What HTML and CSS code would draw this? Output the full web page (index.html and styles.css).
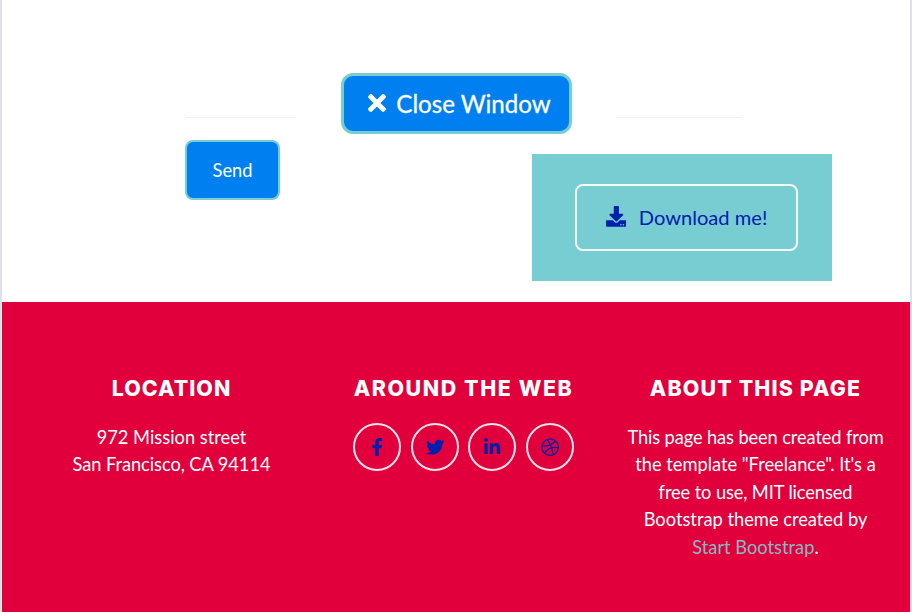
FILE: index.html
```html
<!DOCTYPE html>
<html lang="en">
<head>
<meta charset="utf-8">
<title>Freelance</title>
<link rel="stylesheet" href="styles.css">
</head>
<body>
<div class="page">
  <main class="content">
    <div class="close-row">
      <hr class="rule rule-left">
      <button class="btn btn-close"><svg class="icon-times" viewBox="0 0 352 512"><path d="M242.72 256l100.07-100.07c12.28-12.28 12.28-32.19 0-44.48l-22.24-22.24c-12.28-12.28-32.19-12.28-44.48 0L176 189.28 75.93 89.21c-12.28-12.28-32.19-12.28-44.48 0L9.21 111.45c-12.28 12.28-12.28 32.19 0 44.48L109.28 256 9.21 356.07c-12.28 12.28-12.28 32.19 0 44.48l22.24 22.24c12.28 12.28 32.2 12.28 44.48 0L176 322.72l100.07 100.07c12.28 12.28 32.2 12.28 44.48 0l22.24-22.24c12.28-12.28 12.28-32.19 0-44.48L242.72 256z"/></svg><span>Close Window</span></button>
      <hr class="rule rule-right">
    </div>
    <div class="action-row">
      <button class="btn btn-send">Send</button>
      <div class="download-panel">
        <button class="btn btn-download"><svg class="icon-download" viewBox="0 0 512 512"><path d="M216 0h80c13.3 0 24 10.7 24 24v168h87.7c17.8 0 26.7 21.5 14.1 34.1L269.7 378.3c-7.5 7.5-19.8 7.5-27.3 0L90.1 226.1c-12.6-12.6-3.7-34.1 14.1-34.1H192V24c0-13.3 10.7-24 24-24zm296 376v112c0 13.3-10.7 24-24 24H24c-13.3 0-24-10.7-24-24V376c0-13.3 10.7-24 24-24h146.7l49 49c20.1 20.1 52.5 20.1 72.6 0l49-49H488c13.3 0 24 10.7 24 24zm-124 88c0-11-9-20-20-20s-20 9-20 20 9 20 20 20 20-9 20-20zm64 0c0-11-9-20-20-20s-20 9-20 20 9 20 20 20 20-9 20-20z"/></svg><span>Download me!</span></button>
      </div>
    </div>
  </main>
  <footer class="footer">
    <section class="column">
      <h4 class="heading location">LOCATION</h4>
      <p class="text">972 Mission street<br><span class="snug">San Francisco, CA 94114</span></p>
    </section>
    <section class="column">
      <h4 class="heading around">AROUND THE WEB</h4>
      <div class="social">
        <a class="social-link" aria-label="Facebook"><svg viewBox="-96 0 512 512"><path d="M279.14 288l14.22-92.66h-88.91v-60.13c0-25.35 12.42-50.06 52.24-50.06h40.42V6.26S260.43 0 225.36 0c-73.22 0-121.08 44.38-121.08 124.72v70.62H22.89V288h81.39v224h100.17V288z"/></svg></a>
        <a class="social-link" aria-label="Twitter"><svg viewBox="0 0 512 512"><path d="M459.37 151.716c.325 4.548.325 9.097.325 13.645 0 138.72-105.583 298.558-298.558 298.558-59.452 0-114.68-17.219-161.137-47.106 8.447.974 16.568 1.299 25.34 1.299 49.055 0 94.213-16.568 130.274-44.832-46.132-.975-84.792-31.188-98.112-72.772 6.498.974 12.995 1.624 19.818 1.624 9.421 0 18.843-1.3 27.614-3.573-48.081-9.747-84.143-51.98-84.143-102.985v-1.299c13.969 7.797 30.214 12.67 47.431 13.319-28.264-18.843-46.781-51.005-46.781-87.391 0-19.492 5.197-37.36 14.294-52.954 51.655 63.675 129.3 105.258 216.365 109.807-1.624-7.797-2.599-15.918-2.599-24.04 0-57.828 46.782-104.934 104.934-104.934 30.213 0 57.502 12.67 76.67 33.137 23.715-4.548 46.456-13.32 66.599-25.34-7.798 24.366-24.366 44.833-46.132 57.827 21.117-2.273 41.584-8.122 60.426-16.243-14.292 20.791-32.161 39.308-52.628 54.253z"/></svg></a>
        <a class="social-link" aria-label="LinkedIn"><svg viewBox="-32 0 512 512"><path d="M100.28 448H7.4V148.9h92.88zM53.79 108.1C24.09 108.1 0 83.5 0 53.8a53.79 53.79 0 0 1 107.58 0c0 29.7-24.1 54.3-53.79 54.3zM447.9 448h-92.68V302.4c0-34.7-.7-79.2-48.29-79.2-48.29 0-55.69 37.7-55.69 76.7V448h-92.78V148.9h89.08v40.8h1.3c12.4-23.5 42.69-48.3 87.88-48.3 94 0 111.28 61.9 111.28 142.3V448z"/></svg></a>
        <a class="social-link" aria-label="Dribbble"><svg class="outline" viewBox="0 0 512 512"><circle cx="256" cy="256" r="230"/><path d="M172 43c65 82 135 205 168 412M30 225c147 2 274-20 370-146M102 424c74-126 197-190 381-153"/></svg></a>
      </div>
    </section>
    <section class="column">
      <h4 class="heading about">ABOUT THIS PAGE</h4>
      <p class="text"><span class="tight">This page has been created from</span><br>the template "Freelance". It's a<br><span class="tight">free to use, MIT licensed</span><br>Bootstrap theme created by<br><a class="link">Start Bootstrap</a>.</p>
    </section>
  </footer>
</div>
</body>
</html>
```
FILE: styles.css
```css
* { box-sizing: border-box; }
body { margin: 0; font-family: Lato, sans-serif; }
.page {
  height: 612px;
  border: solid #dee2e6;
  border-width: 0 2px;
  display: flex;
  flex-direction: column;
  overflow: hidden;
}
.content { height: 302px; padding: 73px 78px 0 183px; background: #fff; }
.close-row { display: flex; height: 61px; }
.rule { height: 1px; margin: 44px 0 0; border: 0; background: #f2f2f2; }
.rule-left { width: 111px; }
.rule-right { width: 126px; }
.btn {
  display: flex;
  align-items: center;
  justify-content: center;
  font-family: inherit;
  padding: 0;
  color: #fff;
  white-space: nowrap;
}
.btn svg { fill: currentColor; }
.btn-close {
  width: 231px;
  height: 61px;
  margin: 0 44px 0 45px;
  padding: 0 0 1px 6px;
  gap: 10px;
  font-size: 24.1px;
  -webkit-text-stroke: 0.3px #fff;
  background: #0080f0;
  border: 3px solid #78cdd2;
  border-radius: 12px;
}
.icon-times { width: 18px; height: 26px; }
.action-row { display: flex; justify-content: space-between; align-items: flex-start; padding-top: 6px; }
.btn-send {
  width: 95px;
  height: 60px;
  font-size: 18.3px;
  background: #0080f0;
  border: 2px solid #78cdd2;
  border-radius: 8px;
}
.download-panel {
  width: 300px;
  height: 127px;
  margin-top: 14px;
  padding: 30px 33px 0 43px;
  background: #78cdd2;
}
.btn-download {
  width: 223px;
  height: 67px;
  gap: 12.5px;
  padding-bottom: 2px;
  font-size: 20.1px;
  color: #0020ac;
  background: none;
  border: 2px solid #f5fcfc;
  border-radius: 8px;
}
.icon-download { width: 20.7px; height: 20.7px; }
.footer {
  flex: 1;
  display: grid;
  grid-template-columns: repeat(3, 292px);
  padding: 73px 0 0 23.5px;
  background: #e1003c;
  color: #fff;
  text-align: center;
}
.heading {
  margin: 0 0 22px;
  font: 800 21.4px/26px Inter, sans-serif;
  white-space: nowrap;
}
.location { letter-spacing: 1.05px; }
.around { letter-spacing: 1.6px; }
.about { letter-spacing: 1.15px; }
.text { margin: 0; padding-top: 0.6px; font-size: 18.3px; line-height: 27.5px; white-space: nowrap; }
.tight { letter-spacing: -0.12px; }
.snug { letter-spacing: -0.07px; }
.link { color: #86b9c3; }
.social { display: flex; justify-content: center; gap: 9.6px; }
.social-link {
  width: 48px;
  height: 48px;
  border: 2px solid #fbe5ea;
  border-radius: 50%;
  display: flex;
  align-items: center;
  justify-content: center;
}
.social-link svg { width: 18.3px; height: 18.3px; fill: #0020ac; }
.social-link .outline { fill: none; stroke: #0020ac; stroke-width: 36; }
```
